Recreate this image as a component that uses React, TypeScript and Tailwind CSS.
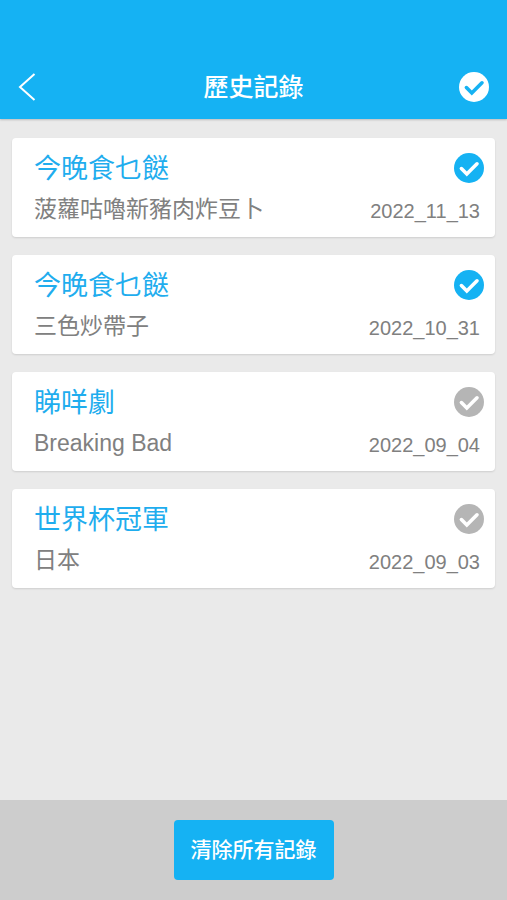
import { useState } from 'react';

type HistoryItem = {
    id: number;
    title: string;
    result: string;
    date: string;
    checked: boolean;
};

const initialItems: HistoryItem[] = [
    { id: 1, title: '今晚食乜餸', result: '菠蘿咕嚕新豬肉炸豆卜', date: '2022_11_13', checked: true },
    { id: 2, title: '今晚食乜餸', result: '三色炒帶子', date: '2022_10_31', checked: true },
    { id: 3, title: '睇咩劇', result: 'Breaking Bad', date: '2022_09_04', checked: false },
    { id: 4, title: '世界杯冠軍', result: '日本', date: '2022_09_03', checked: false },
];

const CheckCircle = ({ circle, tick }: { circle: string; tick: string }) => (
    <svg viewBox="0 0 30 30" className="size-[30px]" aria-hidden="true">
        <circle cx="15" cy="15" r="15" className={circle} />
        <path
            d="M7.4 15.6L12.8 21L23 10.8"
            fill="none"
            strokeWidth="3.6"
            strokeLinecap="round"
            className={tick}
        />
    </svg>
);

const HistoryCard = ({ item, onToggle }: { item: HistoryItem; onToggle: () => void }) => (
    <li className="flex h-[99px] justify-between rounded bg-white pt-[13px] pr-[11px] pl-[22px] shadow-[0_1px_2px_rgba(0,0,0,0.12)]">
        <div>
            <h2 className="text-[27px] leading-9 text-[#1fadee]">{item.title}</h2>
            <p className="mt-1 text-[23px] leading-9 text-[#808080]">{item.result}</p>
        </div>
        <div className="flex flex-col items-end pt-[2px]">
            <button type="button" aria-label="選取" aria-pressed={item.checked} onClick={onToggle}>
                <CheckCircle
                    circle={item.checked ? 'fill-[#15b2f3]' : 'fill-[#b5b5b5]'}
                    tick="stroke-white"
                />
            </button>
            <time className="mt-[10px] mr-1 text-xl leading-9 text-[#808080]">{item.date}</time>
        </div>
    </li>
);

const HistoryPage = () => {
    const [items, setItems] = useState(initialItems);

    const toggle = (id: number) => {
        setItems(items.map((i) => (i.id === id ? { ...i, checked: !i.checked } : i)));
    };

    const checkAll = () => {
        setItems(items.map((i) => ({ ...i, checked: true })));
    };

    return (
        <div className="flex min-h-screen flex-col bg-[#eaeaea] font-['Liberation_Sans','Noto_Sans_CJK_TC',sans-serif]">
            <header className="grid grid-cols-[1fr_auto_1fr] items-center bg-[#15b2f3] px-[18px] pt-[68px] pb-[13px] text-white shadow-[0_1px_2px_rgba(0,0,0,0.2)]">
                <button type="button" aria-label="返回" className="justify-self-start">
                    <svg viewBox="0 0 18 28" className="h-7 w-[18px]" fill="none" stroke="currentColor" strokeWidth="2">
                        <path d="M16.5 1L2 14L16.5 27" />
                    </svg>
                </button>
                <h1 className="text-[25px] leading-[38px] font-medium">歷史記錄</h1>
                <button type="button" aria-label="全選" className="justify-self-end" onClick={checkAll}>
                    <CheckCircle circle="fill-white" tick="stroke-[#15b2f3]" />
                </button>
            </header>

            <ul className="flex flex-1 flex-col gap-[18px] px-3 pt-[19px] pb-5">
                {items.map((item) => (
                    <HistoryCard key={item.id} item={item} onToggle={() => toggle(item.id)} />
                ))}
            </ul>

            <footer className="flex justify-center bg-[#cdcdcd] py-5">
                <button
                    type="button"
                    onClick={() => setItems([])}
                    className="h-[60px] rounded bg-[#15b2f3] px-[17px] text-[21px] font-medium text-white"
                >
                    清除所有記錄
                </button>
            </footer>
        </div>
    );
};

export default HistoryPage;
